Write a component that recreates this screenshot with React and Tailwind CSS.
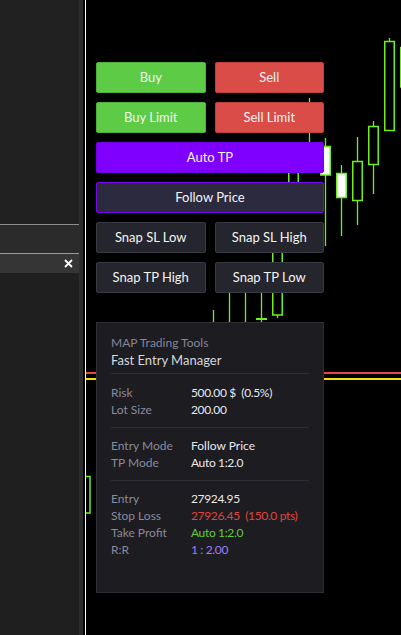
import React from 'react';

const GREEN = '#70ee1e';

// candles drawn in page coordinates (viewBox starts at x=86)
const candles = [
  { x: 213, wt: 310, wb: 420 },
  { x: 229, wt: 285, wb: 420 },
  { x: 245, wt: 285, wb: 420 },
  { x: 261, wt: 285, wb: 420, tick: 319 },
  { x: 277, wt: 245, wb: 318, bt: 250, bb: 315 },
  { x: 293, wt: 150, wb: 210, bt: 160, bb: 205 },
  { x: 309, wt: 98, wb: 168, bt: 104, bb: 130 },
  { x: 325, wt: 138, wb: 246, bt: 146.5, bb: 175, fill: '#ffffff' },
  { x: 341, wt: 165, wb: 236, bt: 173.5, bb: 197.5, fill: '#ffffff' },
  { x: 357, wt: 137, wb: 225, bt: 161.5, bb: 200.5 },
  { x: 373, wt: 121, wb: 194, bt: 126.5, bb: 164.5 },
  { x: 389, wt: 38, wb: 131, bt: 41.5, bb: 130.5 },
  { x: 405, wt: 40, wb: 95, bt: 47.5, bb: 87, fill: GREEN },
];

const Chart = () => (
  <svg className="absolute inset-0" width="315" height="635" viewBox="86 0 315 635">
    <rect x="80.5" y="476.5" width="9.5" height="36.5" fill="none" stroke={GREEN} strokeWidth="1.5" />
    {candles.map((c, i) => (
      <g key={i}>
        <line x1={c.x + 0.5} x2={c.x + 0.5} y1={c.wt} y2={c.wb} stroke={GREEN} strokeWidth="1.3" />
        {c.bt && (
          <rect
            x={c.x - 4.25}
            y={c.bt}
            width="9.5"
            height={c.bb - c.bt}
            fill={c.fill || '#000'}
            stroke={GREEN}
            strokeWidth="1.5"
          />
        )}
        {c.tick && <rect x={c.x - 5} y={c.tick - 1} width="11" height="2" fill={GREEN} />}
      </g>
    ))}
    <rect x="86" y="372" width="315" height="2" fill="#e8473f" />
    <rect x="86" y="378" width="315" height="2" fill="#f2e000" />
  </svg>
);

const Btn = ({ children, className }) => (
  <button
    className={`h-[31px] rounded-[2px] border text-[13px] text-[#f4f4f4] flex items-center justify-center ${className}`}
  >
    {children}
  </button>
);

const Row = ({ label, children }) => (
  <div className="flex h-[17px] items-center text-[12px]">
    <span className="w-[80px] text-[#8a8a9c]">{label}</span>
    <span className="whitespace-pre">{children}</span>
  </div>
);

const Num = ({ children, className = '' }) => (
  <span className={`tracking-[-0.35px] ${className}`}>{children}</span>
);

export default function App() {
  return (
    <div
      className="flex h-[635px] w-[401px] overflow-hidden bg-black"
      style={{ fontFamily: 'Lato, "Noto Sans", sans-serif' }}
    >
      <div className="flex w-[79px] flex-col bg-[#212121]">
        <div className="h-[224px]" />
        <div className="h-[1px] bg-[#8f8f8f]" />
        <div className="h-[28px] bg-[#2b2b2b]" />
        <div className="h-[1px] bg-[#9a9a9a]" />
        <div className="flex h-[19px] items-center justify-end bg-[#353535] pr-[6px]">
          <svg width="9" height="9" viewBox="0 0 9 9">
            <path d="M1 1 L8 8 M8 1 L1 8" stroke="#ffffff" strokeWidth="1.8" />
          </svg>
        </div>
        <div className="flex-1 bg-[#1f1f1f]" />
      </div>
      <div className="w-[4px] bg-[#2c2c2c]" />
      <div className="w-[2px] bg-[#050505]" />
      <div className="w-[1px] bg-white" />

      <div className="relative flex-1">
        <Chart />
        <div className="relative flex w-[228px] flex-col gap-[9px] pl-[10px] pt-[62px] box-content">
          <div className="grid grid-cols-2 gap-[9px]">
            <Btn className="bg-[#5dcb45] border-[#4fb23b]">Buy</Btn>
            <Btn className="bg-[#d94c48] border-[#c2403c]">Sell</Btn>
          </div>
          <div className="grid grid-cols-2 gap-[9px]">
            <Btn className="bg-[#5dcb45] border-[#4fb23b]">Buy Limit</Btn>
            <Btn className="bg-[#d94c48] border-[#c2403c]">Sell Limit</Btn>
          </div>
          <Btn className="bg-[#7f00ff] border-[#7300e8]">Auto TP</Btn>
          <Btn className="bg-[#2c2a3e] border-[#7606f0]">Follow Price</Btn>
          <div className="grid grid-cols-2 gap-[9px]">
            <Btn className="bg-[#25252d] border-[#393943]">Snap SL Low</Btn>
            <Btn className="bg-[#25252d] border-[#393943]">Snap SL High</Btn>
          </div>
          <div className="grid grid-cols-2 gap-[9px]">
            <Btn className="bg-[#25252d] border-[#393943]">Snap TP High</Btn>
            <Btn className="bg-[#25252d] border-[#393943]">Snap TP Low</Btn>
          </div>

          <div className="mt-[20px] h-[271px] border border-[#2d2d35] bg-[#1c1c21] px-[14px] pt-[11px] text-[#e8e8f0]">
            <div className="flex h-[17px] items-center text-[12px] text-[#85859a]">MAP Trading Tools</div>
            <div className="flex h-[20px] items-center text-[13px] text-[#d6d6de]">Fast Entry Manager</div>
            <div className="mt-[2px] h-[1px] bg-[#2e2e36]" />
            <div className="mt-[10px]">
              <Row label="Risk"><Num>500.00 $  (0.5%)</Num></Row>
              <Row label="Lot Size"><Num>200.00</Num></Row>
            </div>
            <div className="mt-[9px] h-[1px] bg-[#2e2e36]" />
            <div className="mt-[9px]">
              <Row label="Entry Mode">Follow Price</Row>
              <Row label="TP Mode"><Num>Auto 1:2.0</Num></Row>
            </div>
            <div className="mt-[9px] h-[1px] bg-[#2e2e36]" />
            <div className="mt-[9px]">
              <Row label="Entry"><Num>27924.95</Num></Row>
              <Row label="Stop Loss">
                <Num className="text-[#e2443f]">27926.45  (150.0 pts)</Num>
              </Row>
              <Row label="Take Profit">
                <Num className="text-[#5fcf3c]">Auto 1:2.0</Num>
              </Row>
              <Row label="R:R">
                <Num className="text-[#9d7cff]">1 : 2.00</Num>
              </Row>
            </div>
          </div>
        </div>
      </div>
    </div>
  );
}
